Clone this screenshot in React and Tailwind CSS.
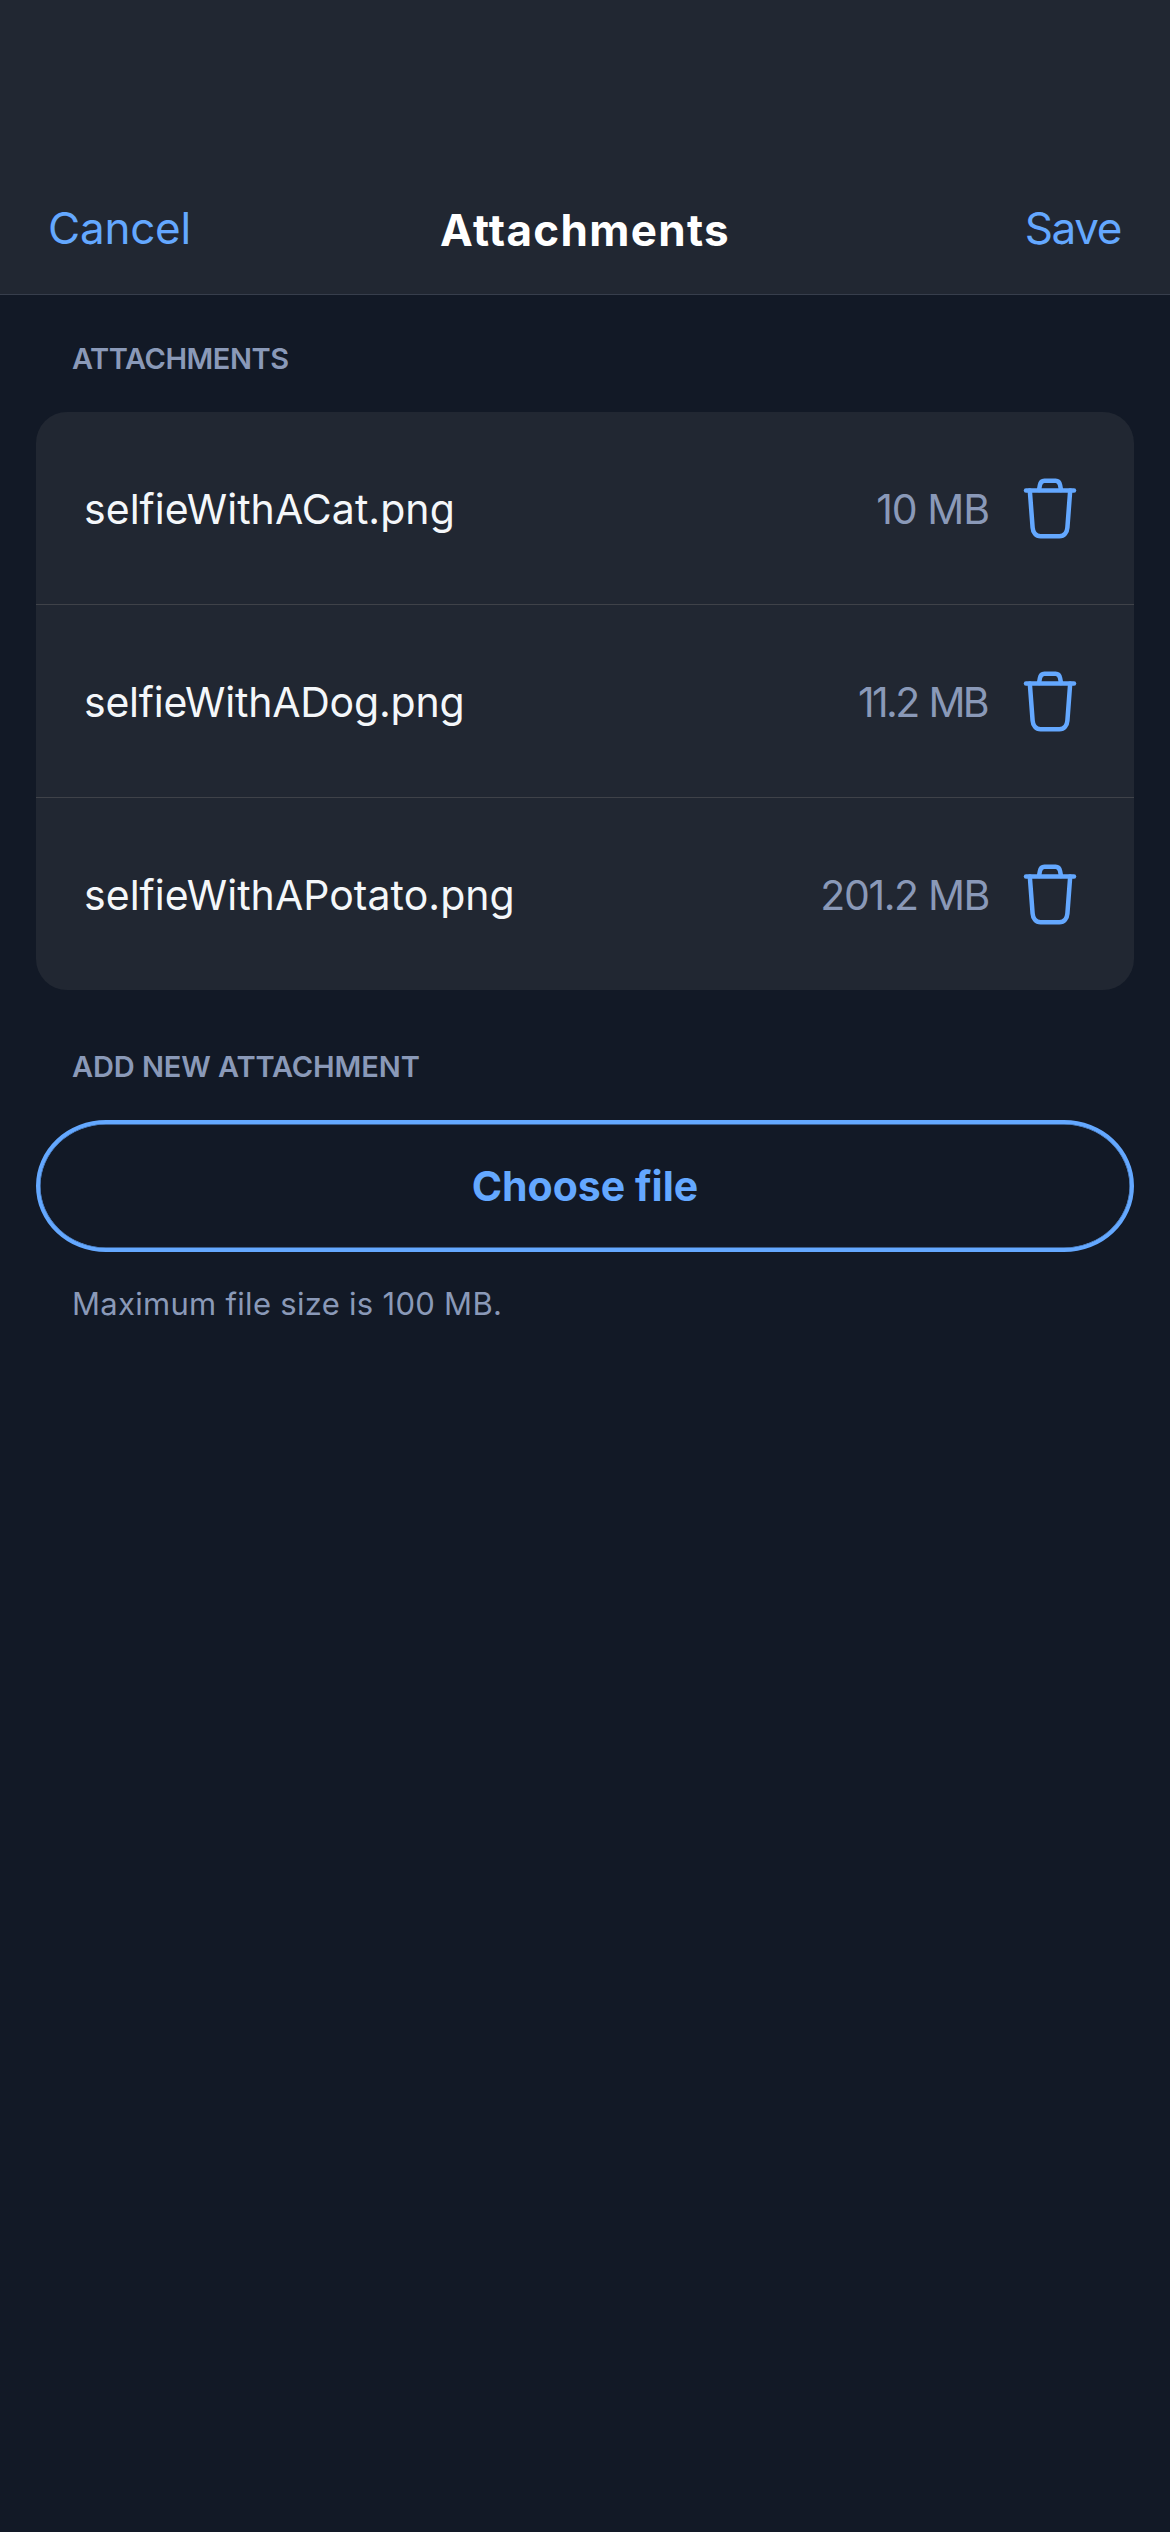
const files = [
  { name: 'selfieWithACat.png', nameClass: 'tracking-[0.05px]', size: '10 MB', sizeClass: 'mr-px tracking-[-1.03px]' },
  { name: 'selfieWithADog.png', nameClass: 'tracking-[-0.22px]', size: '11.2 MB', sizeClass: 'mr-[3px] tracking-[-2.65px] [word-spacing:2px]' },
  { name: 'selfieWithAPotato.png', nameClass: 'tracking-[0.05px]', size: '201.2 MB', sizeClass: 'mr-px tracking-[-1.38px]' },
];

function TrashIcon() {
  return (
    <svg
      className="size-18 text-[#64a8ff]"
      viewBox="0 0 72 72"
      fill="none"
      stroke="currentColor"
      strokeWidth="4.5"
      strokeLinecap="round"
      strokeLinejoin="round"
      aria-hidden="true"
    >
      <path d="M12 18.4H60" />
      <path d="M15.8 18.4L18.6 55.5C19 60.8 21.8 64.3 26.6 64.3H45.4C50.2 64.3 53 60.8 53.4 55.5L56.2 18.4" />
      <path d="M25 18L25.9 13.2C26.5 10 28 8.7 30.4 8.7H41.6C44 8.7 45.5 10 46.1 13.2L47 18" />
    </svg>
  );
}

function Header() {
  return (
    <header className="grid h-[295px] grid-cols-[1fr_auto_1fr] items-center border-b border-[#373e4c] bg-[#212732] px-12 pt-[162px] text-[44px] leading-none">
      <button className="justify-self-start tracking-[-0.23px] text-[#64a8ff]">Cancel</button>
      <h1 className="pt-1 font-bold tracking-[1.31px] text-white">Attachments</h1>
      <button className="mr-px justify-self-end tracking-[-1.39px] text-[#64a8ff]">Save</button>
    </header>
  );
}

function FileRow({ file }) {
  return (
    <li className="flex h-[193px] items-center border-b border-[#3f4249] px-12 text-[41px] leading-none last:h-48 last:border-b-0">
      <span className={`flex-1 pt-0.5 text-[#f4f7fa] ${file.nameClass}`}>{file.name}</span>
      <span className={`pt-0.5 text-[#8a99b8] ${file.sizeClass}`}>{file.size}</span>
      <button className="ml-6" aria-label="Delete">
        <TrashIcon />
      </button>
    </li>
  );
}

export default function App() {
  return (
    <div className="min-h-screen bg-[#121926] font-['Inter','Liberation_Sans',sans-serif] antialiased">
      <Header />
      <main className="px-9">
        <h2 className="flex h-[117px] items-center pt-2.5 pl-9 text-[29px] font-semibold tracking-[-0.45px] text-[#8a99b8]">
          ATTACHMENTS
        </h2>
        <ul className="overflow-hidden rounded-[31px] bg-[#212732]">
          {files.map((file) => (
            <FileRow key={file.name} file={file} />
          ))}
        </ul>
        <h2 className="flex h-[130px] items-center pt-[23px] pl-9 text-[29px] font-semibold tracking-[-0.1px] text-[#8a99b8]">
          ADD NEW ATTACHMENT
        </h2>
        <button className="flex h-33 w-full items-center justify-center rounded-[70px/66px] border-4 border-[#64a8ff] text-[41px] leading-none font-bold text-[#64a8ff] shadow-[inset_0_0_0_0.5px_#64a8ff]">
          Choose file
        </button>
        <p className="mt-[30px] pl-9 text-[31px] leading-11 tracking-[0.29px] text-[#8a99b8]">
          Maximum file size is 100 MB.
        </p>
      </main>
    </div>
  );
}
